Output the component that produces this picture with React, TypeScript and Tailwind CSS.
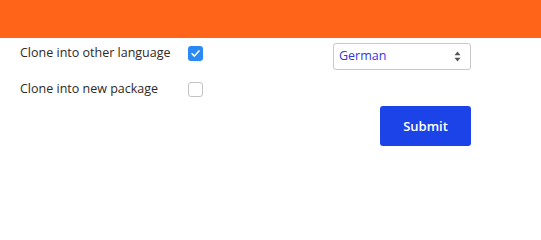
import React from "react";

export default function App() {
  return (
    <div className="w-[541px] h-[209px] bg-white" style={{ fontFamily: '"Open Sans", "Noto Sans", sans-serif' }}>
      <div className="h-[38px] bg-[#ff6418]" />
      <div className="flex">
        <div className="w-[333px] pl-[20px] pt-[7px] flex flex-col gap-[20px]">
          <div className="flex items-center h-[16px]">
            <span className="w-[168px] text-[12.5px] text-[#2e2925] leading-none">Clone into other language</span>
            <span className="w-[15px] h-[15px] rounded-[3px] bg-[#2a89f5] flex items-center justify-center">
              <svg width="11" height="11" viewBox="0 0 12 12" fill="none">
                <path d="M2.2 6.3 L4.8 8.8 L9.8 3.2" stroke="white" strokeWidth="1.7" strokeLinecap="round" strokeLinejoin="round" />
              </svg>
            </span>
          </div>
          <div className="flex items-center h-[16px]">
            <span className="w-[168px] text-[12.5px] text-[#2e2925] leading-none">Clone into new package</span>
            <span className="w-[15px] h-[15px] rounded-[3px] border border-[#c4c4c4] bg-white" />
          </div>
        </div>
        <div className="w-[138px] pt-[5px] flex flex-col items-end">
          <div className="w-[138px] h-[27px] rounded-[3px] border border-[#c8c8c8] flex items-center justify-between pl-[5px] pr-[9px]">
            <span className="text-[12.5px] text-[#3535e0] leading-none">German</span>
            <svg width="7" height="11" viewBox="0 0 7 11">
              <path d="M3.5 0.5 L6.5 4.2 L0.5 4.2 Z" fill="#555" />
              <path d="M3.5 10.5 L6.5 6.8 L0.5 6.8 Z" fill="#555" />
            </svg>
          </div>
          <button className="mt-[36px] w-[91px] h-[40px] rounded-[3px] bg-[#1b43e8] text-white text-[13px] font-semibold leading-none">
            Submit
          </button>
        </div>
      </div>
    </div>
  );
}
